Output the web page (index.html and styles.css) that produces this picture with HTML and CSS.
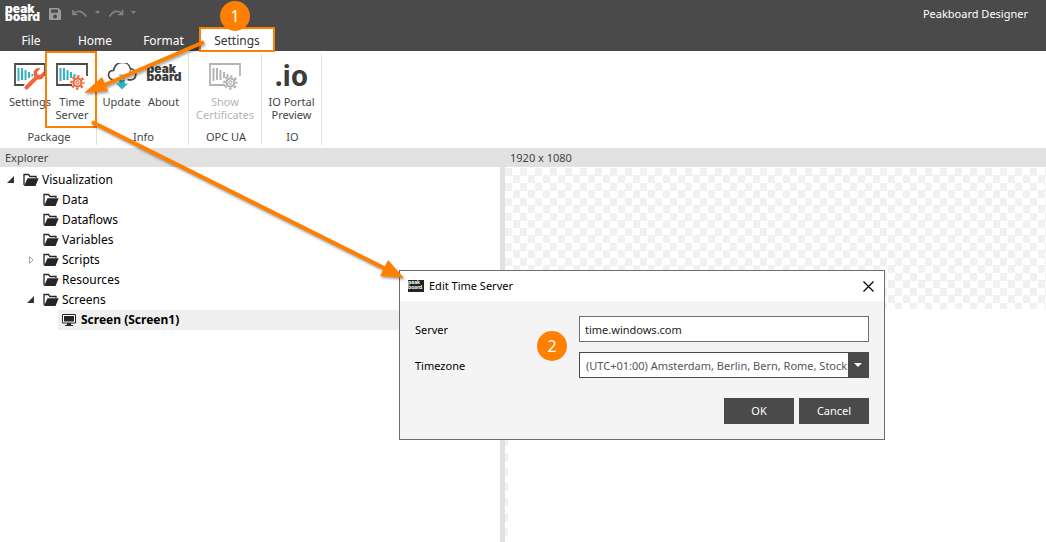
FILE: index.html
```html
<!DOCTYPE html>
<html lang="en">
<head>
<meta charset="utf-8">
<title>Peakboard Designer</title>
<link rel="stylesheet" href="styles.css">
</head>
<body>
<svg class="defs" aria-hidden="true">
  <symbol id="folder" viewBox="0 0 16 14">
    <path d="M1 12V1.500h4.500l1.500 2h6V5" fill="none" stroke="#262626" stroke-width="1.300"/>
    <path d="M1 13 4.500 5.200H15.700L12.500 13z" fill="#262626"/>
  </symbol>
  <symbol id="board" viewBox="0 0 32 26">
    <path d="M16 22H1V1h30v12" fill="none" stroke="var(--frame)" stroke-width="1.800"/>
    <path d="M4.500 5v13M8 5v12M11.500 7v10M15 9v6M18.500 11v3" fill="none" stroke="var(--bars)" stroke-width="2"/>
  </symbol>
  <symbol id="gear" viewBox="0 0 14 14">
    <circle cx="7" cy="7" r="3.700" fill="#fff" stroke="var(--tool)" stroke-width="2"/>
    <circle cx="7" cy="7" r="5.700" fill="none" stroke="var(--tool)" stroke-width="2.200" stroke-dasharray="2.240 2.237" stroke-dashoffset="1.120"/>
    <circle cx="7" cy="7" r="1.500" fill="none" stroke="var(--tool)"/>
  </symbol>
</svg>
<div class="app">
  <header class="top">
    <div class="titlebar">
      <div class="brand">peak<br>board</div>
      <button class="quick" aria-label="Save"><svg width="12" height="12" viewBox="0 0 12 12"><path fill="#9c9c9c" fill-rule="evenodd" d="M0 1q0-1 1-1h8.500L12 2.500V11q0 1-1 1H1q-1 0-1-1zM2 1.500v3.200h7V1.500zM6 6.500a2 2 0 1 0 .01 0z"/></svg></button>
      <button class="quick undo" aria-label="Undo"><svg width="28" height="10" viewBox="0 0 28 10"><path d="M1 1v4.500h4.500M1.500 5C5 1 10 1 14 7.500" fill="none" stroke="#858585" stroke-width="1.700"/><path d="M23 2h5l-2.500 3z" fill="#858585"/></svg></button>
      <button class="quick redo" aria-label="Redo"><svg width="28" height="10" viewBox="0 0 28 10"><path d="M13.500 1v4.500H9M13 5C9.500 1 4.500 1 .5 7.500" fill="none" stroke="#858585" stroke-width="1.700"/><path d="M22 2h5l-2.500 3z" fill="#858585"/></svg></button>
      <h1 class="title">Peakboard Designer</h1>
    </div>
    <nav class="tabs">
      <a class="tab" href="#file">File</a>
      <a class="tab" href="#home">Home</a>
      <a class="tab" href="#format">Format</a>
      <a class="tab active" href="#settings" aria-current="page">Settings<span class="badge one">1</span></a>
    </nav>
  </header>
  <div class="ribbon">
    <section class="group package">
      <div class="tools">
        <button class="tool"><svg width="32" height="28" viewBox="0 0 32 28"><use href="#board" width="32" height="26"/><path d="M12 25 22.500 14.500" stroke="#fff" stroke-width="7"/><path d="M12.500 24.500 23 14" stroke="#f0643c" stroke-width="4" stroke-linecap="round"/><path d="M29.500 8.500l-3.500 3.500-2.500-.5-.5-2.500L26.500 5.500a5 5 0 0 0-6.500 6.500a5 5 0 0 0 5.500 4.500a5 5 0 0 0 4-8z" fill="#f0643c"/></svg><span>Settings</span></button>
        <button class="tool highlighted"><svg width="32" height="28" viewBox="0 0 32 28"><use href="#board" width="32" height="26"/><use href="#gear" x="14" y="12" width="15" height="15"/></svg><span>Time<br>Server</span></button>
      </div>
      <h2>Package</h2>
    </section>
    <section class="group info">
      <div class="tools">
        <button class="tool"><svg width="32" height="30" viewBox="0 0 32 30"><path d="M10 18H7C-.5 17 0 8 7 8C9-3 23-3 25 6C33 8 32 17 26 18H22" fill="none" stroke="#4a4a4a" stroke-width="1.800"/><path d="M20 13l4-1 1-5" fill="none" stroke="#4a4a4a"/><path d="M13 13h6M13 16h6" stroke="#2fb4c4" stroke-width="1.500"/><path d="M13 18h6v4h3.500L16 28.500 9.500 22H13z" fill="#2fb4c4"/></svg><span>Update</span></button>
        <button class="tool about"><span class="brand dark">peak<br>board</span><span>About</span></button>
      </div>
      <h2>Info</h2>
    </section>
    <section class="group opc">
      <div class="tools">
        <button class="tool" disabled><svg width="32" height="28" viewBox="0 0 32 28"><use href="#board" width="32" height="26"/><use href="#gear" x="14" y="12" width="15" height="15"/></svg><span>Show<br>Certificates</span></button>
      </div>
      <h2>OPC UA</h2>
    </section>
    <section class="group io">
      <div class="tools">
        <button class="tool"><span class="io-mark">.io</span><span>IO Portal<br>Preview</span></button>
      </div>
      <h2>IO</h2>
    </section>
  </div>
  <main class="work">
    <aside class="explorer">
      <h2 class="panel-title">Explorer</h2>
      <ul class="tree">
        <li><div class="row"><svg class="twist" viewBox="0 0 8 8"><path d="M7 0v7H0z" fill="#333"/></svg><svg class="folder"><use href="#folder"/></svg>Visualization</div>
          <ul>
            <li><div class="row"><i class="twist"></i><svg class="folder"><use href="#folder"/></svg>Data</div></li>
            <li><div class="row"><i class="twist"></i><svg class="folder"><use href="#folder"/></svg>Dataflows</div></li>
            <li><div class="row"><i class="twist"></i><svg class="folder"><use href="#folder"/></svg>Variables</div></li>
            <li><div class="row"><svg class="twist" viewBox="0 0 8 8"><path d="M2.500.5v7L6 4z" fill="none" stroke="#aaa"/></svg><svg class="folder"><use href="#folder"/></svg>Scripts</div></li>
            <li><div class="row"><i class="twist"></i><svg class="folder"><use href="#folder"/></svg>Resources</div></li>
            <li><div class="row"><svg class="twist" viewBox="0 0 8 8"><path d="M7 0v7H0z" fill="#333"/></svg><svg class="folder"><use href="#folder"/></svg>Screens</div>
              <ul class="screens"><li><div class="row selected"><svg width="14" height="12" viewBox="0 0 14 12"><path d="M.5.5h13v8.500H.5z" fill="#fff" stroke="#262626"/><path d="M2 2h10v5.500H2zM5 9h4v2h2v1H3v-1h2z" fill="#262626"/></svg>Screen (Screen1)</div></li></ul>
            </li>
          </ul>
        </li>
      </ul>
    </aside>
    <section class="stage">
      <h2 class="panel-title">1920 x 1080</h2>
      <div class="canvas"><div class="artboard"></div></div>
    </section>
  </main>
  <form class="dialog" role="dialog" aria-labelledby="dialog-title">
    <div class="dialog-head">
      <span class="dialog-icon">peak<br>board</span>
      <h2 id="dialog-title">Edit Time Server</h2>
      <button type="button" class="close" aria-label="Close"><svg width="11" height="11" viewBox="0 0 11 11"><path d="M.5.5l10 10M10.500.5l-10 10" stroke="#000" stroke-width="1.200"/></svg></button>
    </div>
    <div class="dialog-body">
      <label for="server">Server</label>
      <input id="server" type="text" value="time.windows.com">
      <label for="zone">Timezone</label>
      <div class="combo"><select id="zone"><option>(UTC+01:00) Amsterdam, Berlin, Bern, Rome, Stockholm, Vienna</option></select><span class="drop"><svg width="8" height="4" viewBox="0 0 8 4"><path d="M0 0h8L4 4z" fill="#fff"/></svg></span></div>
      <div class="actions"><button type="button">OK</button><button type="button">Cancel</button></div>
      <span class="badge two">2</span>
    </div>
  </form>
  <svg class="arrows" width="420" height="290" viewBox="0 0 420 290" aria-hidden="true">
    <g fill="#ff8000" stroke="#ff8000">
      <path d="M204 42 102 86" stroke-width="4"/><path d="M84 93 102 77 108 91z" stroke="none"/>
      <path d="M92 122 388 270" stroke-width="4"/><path d="M404 278 380 276 388 260z" stroke="none"/>
    </g>
  </svg>
</div>
</body>
</html>
```
FILE: styles.css
```css
*, ::before, ::after { box-sizing: border-box; }
body { margin: 0; font: 11px/16px "Noto Sans", "Open Sans", sans-serif; color: #000; background: #fff; }
button, input, select { font: inherit; color: inherit; margin: 0; padding: 0; border: 0; background: none; }
h1, h2 { margin: 0; font-size: inherit; font-weight: 400; }
ul { margin: 0; padding: 0; list-style: none; }
svg { display: block; flex: none; }
.defs { position: absolute; width: 0; height: 0; }
.app { position: relative; min-height: 100vh; display: flex; flex-direction: column; overflow: hidden; --frame: #4a4a4a; --bars: #2fb4c4; --tool: #f0643c; }

.top { background: #4a4a4a; color: #fff; }
.titlebar { display: flex; align-items: center; height: 27px; padding: 0 18px 0 5px; }
.brand { width: 34px; padding-bottom: 2px; color: #fff; font: 900 12px/8px Inter, sans-serif; }
.brand.dark { color: #3c3c3c; }
.quick { margin-left: 10px; }
.quick.undo { margin-left: 11px; }
.quick.redo { margin-left: 9px; }
.title { margin-left: auto; }
.tabs { display: flex; height: 24px; padding-left: 9px; font-size: 12px; }
.tab { display: flex; align-items: center; justify-content: center; color: #fff; text-decoration: none; width: 68px; padding-top: 4px; }
.tab:first-child { width: 44px; }
.tab:nth-child(2) { width: 84px; }
.tab:nth-child(3) { width: 53px; }
.tabs .tab.active { position: relative; width: 76px; height: 25px; margin-left: 9px; padding-top: 2px; color: #333; background: #fff; border: 2px solid #ff8000; z-index: 1; }
.badge { position: absolute; display: grid; place-items: center; width: 30px; height: 30px; border-radius: 50%; background: #ff8000; color: #fff; font-size: 16px; line-height: 20px; }
.badge.one { left: 19px; top: -28px; }

.ribbon { display: flex; height: 97px; padding: 3px 0; color: #444; background: #fff; }
.group { display: flex; flex-direction: column; border-right: 1px solid #e1e1e1; text-align: center; }
.group h2 { line-height: 16px; margin-top: auto; padding-left: 2px; }
.tools { display: flex; justify-content: center; }
.package { width: 97px; }
.package .tools { padding-left: 6px; }
.info { width: 92px; }
.opc { width: 73px; }
.io { width: 60px; }
.tool { display: flex; flex-direction: column; align-items: center; justify-content: flex-start; width: 42px; height: 71px; padding-top: 9px; line-height: 13px; white-space: nowrap; }
.tool > svg { height: 28px; }
.tool > span:last-child { margin-top: 4px; }
.tool > .brand, .io-mark { height: 28px; }
.tool:disabled { color: #b4b4b4; --frame: #b4b4b4; --bars: #b4b4b4; --tool: #b4b4b4; }
.tool .brand { padding-top: 2px; text-align: left; }
.io-mark { font: 700 28px/24px "Noto Sans", sans-serif; color: #3c3c3c; }
.tool.highlighted { position: relative; }
.highlighted::after { content: ""; position: absolute; left: -6px; top: -3px; width: 52px; height: 77px; border: 2px solid #ff8000; }

.work { flex: 1; display: flex; }
.explorer { flex: 0 0 505px; border-right: 5px solid #e1e1e1; }
.panel-title { height: 19px; padding: 0 5px; line-height: 19px; color: #444; background: #e1e1e1; }
.tree { padding-top: 3px; font-size: 12px; }
.row { display: flex; align-items: center; height: 20px; padding-left: 7px; }
.tree ul .row { padding-left: 27px; }
.twist { width: 8px; height: 8px; margin-right: 8px; }
.folder { width: 16px; height: 14px; margin-right: 3px; }
.tree .screens { padding-left: 58px; }
.tree ul .row.selected { gap: 5px; padding-left: 4px; font-weight: 700; background: #efefef; }
.stage { flex: 1; display: flex; flex-direction: column; }
.canvas { --checks: repeating-conic-gradient(#fff 0 25%, #f1f1f1 0 50%); flex: 1; padding-top: 1px; background: linear-gradient(#fff, #fff) 3px 0 no-repeat, var(--checks) 0 1px / 15px 15px repeat-y; }
.artboard { height: 141px; background: var(--checks) 0 0 / 15px 15px; }

.dialog { position: absolute; left: 399px; top: 270px; width: 486px; border: 1px solid #6e6e6e; background: #f4f4f4; }
.dialog-head { display: flex; align-items: center; height: 30px; padding: 0 10px 0 8px; background: #fff; }
.dialog-head h2 { font-size: 11px; }
.dialog-icon { width: 16px; height: 12px; margin-right: 5px; color: #fff; background: #222; font: 700 5px/5px Inter, sans-serif; overflow: hidden; }
.close { margin-left: auto; }
.dialog-body { position: relative; display: grid; grid-template-columns: 164px 1fr; row-gap: 10px; align-items: center; padding: 15px; }
.dialog-body label { padding-top: 1px; }
.dialog-body input { width: 100%; height: 26px; padding: 1px 5px 0; border: 1px solid #6e6e6e; background: #fff; color: #222; }
.combo { display: flex; height: 26px; border: 1px solid #4a4a4a; background: #fff; overflow: hidden; }
.combo select { flex: 1; min-width: 0; appearance: none; padding: 1px 0 0 6px; color: #555; text-overflow: clip; }
.drop { display: grid; place-items: center; width: 20px; background: #4a4a4a; }
.actions { grid-column: 1 / -1; display: flex; justify-content: flex-end; gap: 5px; margin-top: 10px; }
.actions button { width: 70px; height: 26px; color: #fff; background: #4a4a4a; }
.badge.two { left: 137px; top: 30px; }
.arrows { position: absolute; left: 0; top: 0; z-index: 2; pointer-events: none; filter: drop-shadow(1px 2px 1px #0005); }
```
